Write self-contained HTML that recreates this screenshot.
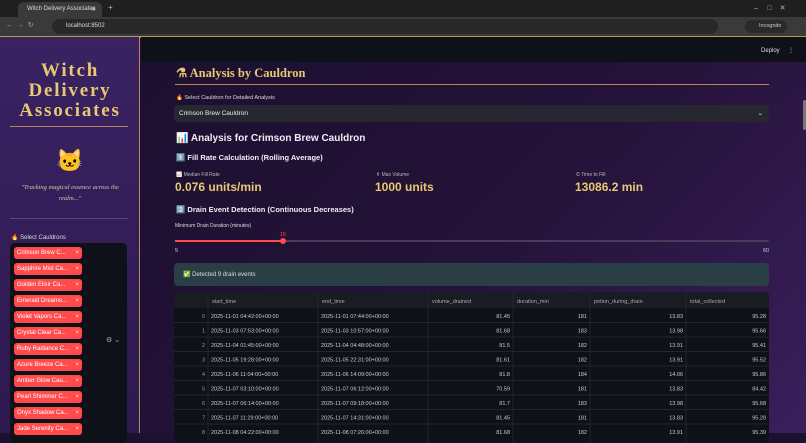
<!DOCTYPE html>
<html><head><meta charset="utf-8"><style>
*{box-sizing:border-box;margin:0;padding:0}
body{width:806px;height:433px;overflow:hidden;background:#1e1030;font-family:"Liberation Sans","Noto Sans CJK SC",sans-serif;position:relative;color:#e8e4f0}
.tabbar{position:absolute;left:0;top:0;width:806px;height:17px;background:#1f1f1f}
.tab{position:absolute;left:18px;top:2px;width:84px;height:15px;background:#3a3a3a;border-radius:6px 6px 0 0;font-size:6px;color:#ddd;padding:4px 0 0 9px}
.addr{position:absolute;left:0;top:17px;width:806px;height:19px;background:#3a3a3a}
.url{position:absolute;left:52px;top:2px;width:666px;height:15px;background:#282828;border-radius:8px;font-size:6px;color:#ddd;padding:4px 0 0 14px}
.gold{position:absolute;left:0;top:36px;width:806px;height:1.5px;background:#b89a55}
.side{position:absolute;left:0;top:37px;width:140px;height:396px;background:linear-gradient(180deg,#3a2263,#2d1a4e);border-right:1.5px solid #b8865a}
.stitle{position:absolute;left:0;top:61px;width:140px;text-align:center;font-family:"Liberation Serif",serif;font-weight:bold;font-size:19px;line-height:20px;color:#e8c872;letter-spacing:1.8px}
.hr{position:absolute;height:1px;background:#b8865a}
.quote{position:absolute;left:10px;top:182px;width:120px;text-align:center;font-family:"Liberation Serif",serif;font-style:italic;font-size:6.5px;line-height:11px;color:#d8c9a8}
.ms{position:absolute;left:10px;top:243px;width:117px;height:200px;background:#0e1117;border-radius:5px}
.tag{position:absolute;left:4px;width:68px;height:12px;background:#ff4b4b;color:#fff;font-size:6px;border-radius:3px;padding:3px 0 0 3px;white-space:nowrap}
.tag b{position:absolute;right:3px;top:2.5px;font-weight:normal}
.top{position:absolute;left:141px;top:37px;width:665px;height:25px;background:#0e1117}
.main{position:absolute;left:141px;top:62px;width:665px;height:371px;background:linear-gradient(135deg,#1c1030 0%,#241238 50%,#3a1f5c 100%)}
.a{position:absolute;white-space:nowrap}
.tbl{position:absolute;left:174px;top:292px;width:595px;height:150px;background:#0e1117;border-radius:4px;overflow:hidden;font-size:5.5px;color:#ddd}
.tbl .h{position:absolute;left:0;top:0;width:595px;height:16px;background:#1a1c24}
</style></head><body>
<div class="tabbar"><div class="tab">Witch Delivery Associates <span style="position:absolute;right:6px">✕</span></div><span class="a" style="left:108px;top:3px;font-size:8px;color:#bbb">+</span>
<span class="a" style="left:754px;top:4px;font-size:7px;color:#bbb">–&nbsp;&nbsp;&nbsp;&nbsp;&nbsp;□&nbsp;&nbsp;&nbsp;&nbsp;✕</span></div>
<div class="addr"><span class="a" style="left:6px;top:4px;font-size:7px;color:#aaa">←&nbsp;&nbsp;→&nbsp;&nbsp;↻</span><div class="url">localhost:8502</div>
<div class="a" style="left:745px;top:3px;width:42px;height:13px;border-radius:7px;background:#2a2a2a;font-size:5.5px;color:#ccc;padding:3px 0 0 14px">Incognito</div></div>
<div class="gold"></div>
<div class="side">
</div>
<div class="stitle">Witch<br>Delivery<br>Associates</div>
<div class="hr" style="left:10px;top:126px;width:118px"></div>
<div class="a" style="left:56px;top:148px;font-size:22px">🐱</div>
<div class="quote">"Tracking magical essence across the realm..."</div>
<div class="hr" style="left:10px;top:218px;width:118px;background:#5a4680"></div>
<div class="a" style="left:11px;top:234px;font-size:6px;color:#ddd">🔥 Select Cauldrons</div>
<div class="ms">
<div class="tag" style="top:4px">Crimson Brew C...<b>×</b></div>
<div class="tag" style="top:20px">Sapphire Mist Ca...<b>×</b></div>
<div class="tag" style="top:36px">Golden Elixir Ca...<b>×</b></div>
<div class="tag" style="top:52px">Emerald Dreams...<b>×</b></div>
<div class="tag" style="top:68px">Violet Vapors Ca...<b>×</b></div>
<div class="tag" style="top:84px">Crystal Clear Ca...<b>×</b></div>
<div class="tag" style="top:100px">Ruby Radiance C...<b>×</b></div>
<div class="tag" style="top:116px">Azure Breeze Ca...<b>×</b></div>
<div class="tag" style="top:132px">Amber Glow Cau...<b>×</b></div>
<div class="tag" style="top:148px">Pearl Shimmer C...<b>×</b></div>
<div class="tag" style="top:164px">Onyx Shadow Ca...<b>×</b></div>
<div class="tag" style="top:180px">Jade Serenity Ca...<b>×</b></div>
<span class="a" style="left:96px;top:93px;font-size:7px;color:#aaa">⚙ ⌄</span>
</div>
<div class="top"><span class="a" style="left:620px;top:10px;font-size:6px;color:#ddd">Deploy&nbsp;&nbsp;&nbsp;&nbsp;&nbsp;⋮</span></div>
<div class="main"></div>
<div class="a" style="left:176px;top:65px;font-family:'Liberation Serif',serif;font-weight:bold;font-size:12.5px;color:#e8c872">⚗ Analysis by Cauldron</div>
<div class="hr" style="left:175px;top:84px;width:594px"></div>
<div class="a" style="left:176px;top:95px;font-size:5.5px;color:#ddd">🔥 Select Cauldron for Detailed Analysis</div>
<div class="a" style="left:174px;top:105px;width:595px;height:17px;background:#262730;border-radius:4px;font-size:6.5px;color:#eee;padding:5px 0 0 5px">Crimson Brew Cauldron<span style="position:absolute;right:6px;top:4px">⌄</span></div>
<div class="a" style="left:176px;top:133px;font-size:10px;font-weight:bold;color:#f0ecf5">📊 Analysis for Crimson Brew Cauldron</div>
<div class="a" style="left:176px;top:153px;font-size:7.5px;font-weight:bold;color:#f0ecf5">1️⃣ Fill Rate Calculation (Rolling Average)</div>
<div class="a" style="left:176px;top:172px;font-size:5px;color:#bbb">📈 Median Fill Rate</div>
<div class="a" style="left:376px;top:172px;font-size:5px;color:#bbb">⚱ Max Volume</div>
<div class="a" style="left:576px;top:172px;font-size:5px;color:#bbb">⏱ Time to Fill</div>
<div class="a" style="left:175px;top:180px;font-size:12px;font-weight:bold;color:#e8c872">0.076 units/min</div>
<div class="a" style="left:375px;top:180px;font-size:12px;font-weight:bold;color:#e8c872">1000 units</div>
<div class="a" style="left:575px;top:180px;font-size:12px;font-weight:bold;color:#e8c872">13086.2 min</div>
<div class="a" style="left:176px;top:205px;font-size:7.5px;font-weight:bold;color:#f0ecf5">2️⃣ Drain Event Detection (Continuous Decreases)</div>
<div class="a" style="left:175px;top:223px;font-size:5px;color:#ddd">Minimum Drain Duration (minutes)</div>
<div class="a" style="left:280px;top:232px;font-size:5.5px;color:#ff4b4b">15</div>
<div class="a" style="left:175px;top:240px;width:594px;height:2px;background:#4a3a5c;border-radius:1px"></div>
<div class="a" style="left:175px;top:240px;width:108px;height:2px;background:#ff4b4b"></div>
<div class="a" style="left:280px;top:238px;width:6px;height:6px;border-radius:3px;background:#ff4b4b"></div>
<div class="a" style="left:175px;top:248px;font-size:5.5px;color:#ccc">5</div>
<div class="a" style="left:763px;top:248px;font-size:5.5px;color:#ccc">60</div>
<div class="a" style="left:174px;top:263px;width:595px;height:23px;background:#2a3f45;border-radius:4px;font-size:6px;color:#ddd;padding:8px 0 0 9px">✅ Detected 9 drain events</div>
<div class="tbl"><div class="h"></div>
<svg width="595" height="150" style="position:absolute;left:0;top:0" font-family="Liberation Sans" font-size="5.5" fill="#ccc">
<g stroke="#2a2c35" stroke-width="0.7">
<line x1="34" y1="0" x2="34" y2="150"/><line x1="144" y1="0" x2="144" y2="150"/><line x1="254" y1="0" x2="254" y2="150"/><line x1="339" y1="0" x2="339" y2="150"/><line x1="416" y1="0" x2="416" y2="150"/><line x1="512" y1="0" x2="512" y2="150"/>
<line x1="0" y1="30.5" x2="595" y2="30.5"/><line x1="0" y1="45" x2="595" y2="45"/><line x1="0" y1="59.5" x2="595" y2="59.5"/><line x1="0" y1="74" x2="595" y2="74"/><line x1="0" y1="88.5" x2="595" y2="88.5"/><line x1="0" y1="103" x2="595" y2="103"/><line x1="0" y1="117.5" x2="595" y2="117.5"/><line x1="0" y1="132" x2="595" y2="132"/></g>
<g fill="#aaa"><text x="38" y="11">start_time</text><text x="148" y="11">end_time</text><text x="258" y="11">volume_drained</text><text x="343" y="11">duration_min</text><text x="420" y="11">potion_during_drain</text><text x="516" y="11">total_collected</text></g>
<g text-anchor="end" fill="#999"><text x="31" y="26">0</text><text x="31" y="40.5">1</text><text x="31" y="55">2</text><text x="31" y="69.5">3</text><text x="31" y="84">4</text><text x="31" y="98.5">5</text><text x="31" y="113">6</text><text x="31" y="127.5">7</text><text x="31" y="142">8</text></g>
<g><text x="37" y="26">2025-11-01 04:42:00+00:00</text><text x="37" y="40.5">2025-11-03 07:53:00+00:00</text><text x="37" y="55">2025-11-04 01:45:00+00:00</text><text x="37" y="69.5">2025-11-05 19:28:00+00:00</text><text x="37" y="84">2025-11-06 11:04:00+00:00</text><text x="37" y="98.5">2025-11-07 03:10:00+00:00</text><text x="37" y="113">2025-11-07 06:14:00+00:00</text><text x="37" y="127.5">2025-11-07 11:29:00+00:00</text><text x="37" y="142">2025-11-08 04:22:00+00:00</text>
<text x="147" y="26">2025-11-01 07:44:00+00:00</text><text x="147" y="40.5">2025-11-03 10:57:00+00:00</text><text x="147" y="55">2025-11-04 04:48:00+00:00</text><text x="147" y="69.5">2025-11-05 22:31:00+00:00</text><text x="147" y="84">2025-11-06 14:09:00+00:00</text><text x="147" y="98.5">2025-11-07 06:12:00+00:00</text><text x="147" y="113">2025-11-07 09:18:00+00:00</text><text x="147" y="127.5">2025-11-07 14:31:00+00:00</text><text x="147" y="142">2025-11-08 07:26:00+00:00</text></g>
<g text-anchor="end"><text x="336" y="26">81.45</text><text x="336" y="40.5">81.68</text><text x="336" y="55">81.5</text><text x="336" y="69.5">81.61</text><text x="336" y="84">81.8</text><text x="336" y="98.5">70.59</text><text x="336" y="113">81.7</text><text x="336" y="127.5">81.45</text><text x="336" y="142">81.68</text>
<text x="413" y="26">181</text><text x="413" y="40.5">183</text><text x="413" y="55">182</text><text x="413" y="69.5">182</text><text x="413" y="84">184</text><text x="413" y="98.5">181</text><text x="413" y="113">183</text><text x="413" y="127.5">181</text><text x="413" y="142">182</text>
<text x="509" y="26">13.83</text><text x="509" y="40.5">13.98</text><text x="509" y="55">13.91</text><text x="509" y="69.5">13.91</text><text x="509" y="84">14.06</text><text x="509" y="98.5">13.83</text><text x="509" y="113">13.98</text><text x="509" y="127.5">13.83</text><text x="509" y="142">13.91</text>
<text x="592" y="26">95.28</text><text x="592" y="40.5">95.66</text><text x="592" y="55">95.41</text><text x="592" y="69.5">95.52</text><text x="592" y="84">95.86</text><text x="592" y="98.5">84.42</text><text x="592" y="113">95.68</text><text x="592" y="127.5">95.28</text><text x="592" y="142">95.39</text></g>
</svg></div>
<div class="a" style="left:803px;top:100px;width:3px;height:30px;background:#777;border-radius:2px"></div>
</body></html>
